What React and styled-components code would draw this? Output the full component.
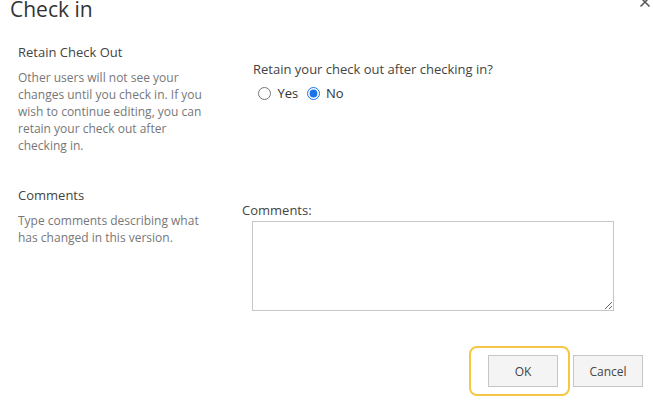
import React, { useState } from "react";
import styled, { createGlobalStyle } from "styled-components";

const GlobalStyle = createGlobalStyle`
    html, body {
        margin: 0;
        padding: 0;
        background: #ffffff;
        overflow: hidden;
    }
    body {
        font-family: "Open Sans", "Noto Sans", sans-serif;
        color: #444444;
    }
`;

const Dialog = styled.div`
    width: 653px;
    height: 400px;
    box-sizing: border-box;
    padding: 0 10px;
`;

const Header = styled.div`
    display: flex;
    justify-content: space-between;
    align-items: flex-start;
`;

const Title = styled.h1`
    margin: 0;
    font-size: 21px;
    line-height: 18px;
    padding-bottom: 3px;
    font-weight: 400;
    color: #333333;
`;

const CloseButton = styled.button`
    border: none;
    background: none;
    padding: 0;
    margin: -5px -9px 0 0;
    width: 14px;
    height: 14px;
    display: flex;
    color: #555555;
    cursor: pointer;
`;

const Section = styled.div`
    display: grid;
    grid-template-columns: 232px 1fr;
    padding-top: ${(p) => p.$top}px;
`;

const SectionInfo = styled.div`
    padding-left: 8px;
`;

const SectionTitle = styled.h2`
    margin: 0 0 8px 0;
    font-size: 13px;
    line-height: 17px;
    font-weight: 400;
    color: #444444;
`;

const SectionText = styled.p`
    margin: 0;
    width: 190px;
    font-size: 12px;
    line-height: 17px;
    color: #777777;
`;

const SectionField = styled.div`
    padding-top: ${(p) => p.$top}px;
    padding-left: ${(p) => p.$left}px;
`;

const Question = styled.div`
    font-size: 13px;
    line-height: 17px;
    color: #444444;
    margin-bottom: 6px;
`;

const RadioRow = styled.div`
    font-size: 13px;
    line-height: 17px;
    color: #333333;
`;

const Radio = styled.input`
    accent-color: #1a73e8;
    vertical-align: -2px;
`;

const FieldLabel = styled.label`
    display: block;
    font-size: 13px;
    line-height: 17px;
    color: #444444;
`;

const CommentBox = styled.textarea`
    display: block;
    box-sizing: border-box;
    width: 362px;
    height: 90px;
    margin: 2px 0 0 10px;
    border: 1px solid #c6c6c6;
    outline: none;
    resize: both;
    font-family: "Open Sans", sans-serif;
    font-size: 13px;
`;

const ButtonBar = styled.div`
    display: flex;
    justify-content: flex-end;
    align-items: center;
    gap: 3px;
    margin-top: 35px;
`;

const FocusRing = styled.span`
    display: inline-flex;
    padding: 7px 10px 7px 17px;
    border: 2px solid #f6c744;
    border-radius: 8px;
`;

const Button = styled.button`
    box-sizing: border-box;
    width: 70px;
    height: 32px;
    border: 1px solid #c6c6c6;
    background: #f4f4f4;
    color: #444444;
    font-family: "Open Sans", sans-serif;
    font-size: 12px;
    padding: 0;
    cursor: pointer;
`;

const CloseIcon = () => (
    <svg width="14" height="14" viewBox="0 0 14 14" fill="none">
        <path d="M2.5 2.5L11.5 11.5M11.5 2.5L2.5 11.5" stroke="currentColor" strokeWidth="1.5" />
    </svg>
);

const App = () => {
    const [retain, setRetain] = useState("no");
    const [comment, setComment] = useState("");

    return (
        <Dialog>
            <GlobalStyle />
            <Header>
                <Title>Check in</Title>
                <CloseButton aria-label="Close"><CloseIcon /></CloseButton>
            </Header>

            <Section $top={23}>
                <SectionInfo>
                    <SectionTitle>Retain Check Out</SectionTitle>
                    <SectionText>
                        Other users will not see your changes until you check in. If you wish to continue editing, you can retain your check out after checking in.
                    </SectionText>
                </SectionInfo>
                <SectionField $top={17} $left={11}>
                    <Question>Retain your check out after checking in?</Question>
                    <RadioRow>
                        <Radio type="radio" name="retain" checked={retain === "yes"} onChange={() => setRetain("yes")} /> Yes
                        {" "}
                        <Radio type="radio" name="retain" checked={retain === "no"} onChange={() => setRetain("no")} /> No
                    </RadioRow>
                </SectionField>
            </Section>

            <Section $top={33}>
                <SectionInfo>
                    <SectionTitle>Comments</SectionTitle>
                    <SectionText>Type comments describing what has changed in this version.</SectionText>
                </SectionInfo>
                <SectionField $top={15} $left={0}>
                    <FieldLabel htmlFor="comments">Comments:</FieldLabel>
                    <CommentBox id="comments" value={comment} onChange={(e) => setComment(e.target.value)} />
                </SectionField>
            </Section>

            <ButtonBar>
                <FocusRing><Button>OK</Button></FocusRing>
                <Button>Cancel</Button>
            </ButtonBar>
        </Dialog>
    );
};

export default App;
